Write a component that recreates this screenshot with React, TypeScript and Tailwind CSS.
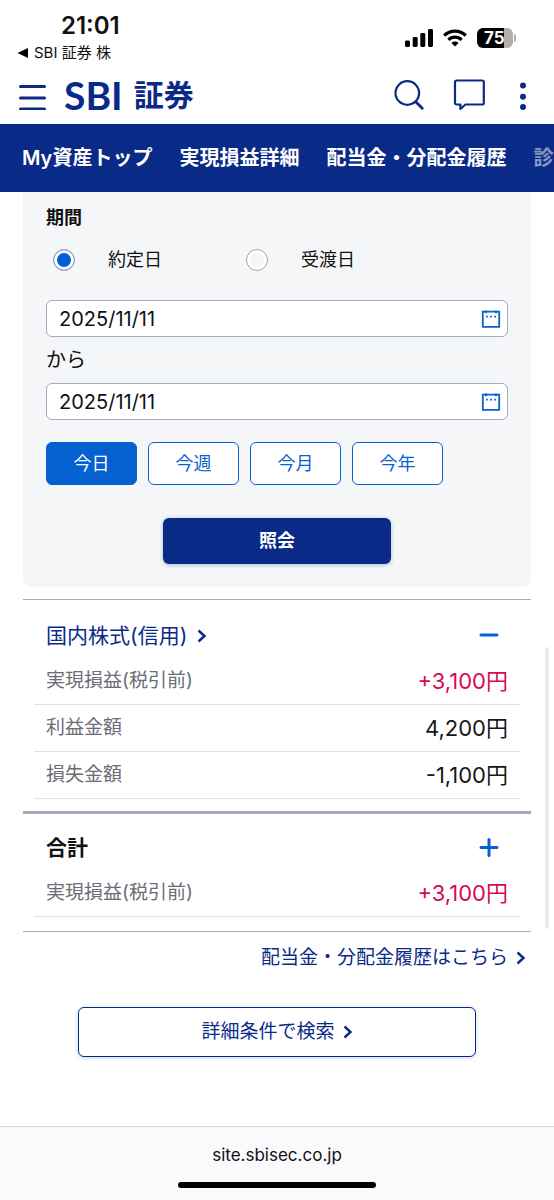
import { useState } from 'react';
import clsx from 'clsx';

// ── Data ─────────────────────────────────────────────────────────────────────

const NAV_ITEMS = ['My資産トップ', '実現損益詳細', '配当金・分配金履歴', '診'];

const PERIODS = ['今日', '今週', '今月', '今年'];

const DATE_TYPES = [
  { value: 'trade', label: '約定日' },
  { value: 'settlement', label: '受渡日' },
];

interface Row {
  label: string;
  value: string;
  gain?: boolean;
}

const MARGIN_ROWS: Row[] = [
  { label: '実現損益(税引前)', value: '+3,100円', gain: true },
  { label: '利益金額', value: '4,200円' },
  { label: '損失金額', value: '-1,100円' },
];

const TOTAL_ROWS: Row[] = [{ label: '実現損益(税引前)', value: '+3,100円', gain: true }];

// ── Icons ────────────────────────────────────────────────────────────────────

function ChevronIcon() {
  return (
    <svg className="h-4 w-[10px]" viewBox="0 0 10 16" fill="none" stroke="currentColor" strokeWidth="2.4">
      <path d="M1.5 2.5 7.5 8l-6 5.5" />
    </svg>
  );
}

function CalendarIcon() {
  return (
    <svg className="size-5" viewBox="0 0 20 20" fill="none" stroke="#0b5fd0">
      <path strokeWidth="1.8" d="M1.8 2.7h16.4v15.2H1.8z" />
      <path strokeWidth="1.8" d="M5 1.6v2.6M15 1.6v2.6" />
      <path strokeWidth="1.8" d="M5 7.6h1.8M9.1 7.6h1.8M13.2 7.6H15" />
    </svg>
  );
}

function StatusIcons() {
  return (
    <div className="flex items-center gap-[10px]">
      <svg className="h-[18px] w-7" viewBox="0 0 28 18">
        <rect x="0" y="11.5" width="5" height="6.5" rx="1.4" />
        <rect x="7.7" y="8" width="5" height="10" rx="1.4" />
        <rect x="15.3" y="4" width="5" height="14" rx="1.4" />
        <rect x="23" y="0" width="5" height="18" rx="1.4" />
      </svg>
      <svg className="h-[18px] w-6" viewBox="0 0 24 18" fill="none" stroke="#000" strokeWidth="3.2">
        <path d="M1.2 6.6a15.4 15.4 0 0 1 21.6 0" />
        <path d="M5.4 10.9a9.4 9.4 0 0 1 13.2 0" />
        <path d="M12 17.6 8.4 14a5.2 5.2 0 0 1 7.2 0z" fill="#000" stroke="none" />
      </svg>
      <div className="flex items-center gap-px">
        <div className="flex h-5 w-9 items-center rounded-[6px] bg-linear-to-r from-black from-75% to-[#b0b0b0] to-75% pl-[7px] text-[17px] leading-5 font-bold text-white">
          75
        </div>
        <div className="h-2 w-[2px] rounded-r-full bg-[#b0b0b0]" />
      </div>
    </div>
  );
}

// ── Header ───────────────────────────────────────────────────────────────────

function StatusBar() {
  return (
    <div className="flex h-16 items-start justify-between pt-3 pr-[38px] pl-[17px]">
      <div>
        <div className="pl-11 text-2xl leading-7 font-semibold">21:01</div>
        <a href="#back" className="flex items-center gap-[5px] text-[15px] leading-[26px]">
          <svg className="h-[10px] w-3" viewBox="0 0 12 10">
            <path d="M0.5 5 11 0v10z" />
          </svg>
          SBI 証券 株
        </a>
      </div>
      <div className="pt-4">
        <StatusIcons />
      </div>
    </div>
  );
}

function Header() {
  return (
    <header className="flex h-[60px] items-center justify-between pr-[27px] pl-[18px] text-[#0a2a88]">
      <div className="flex items-center gap-[18px]">
        <button type="button" aria-label="メニュー">
          <svg className="h-8 w-7" viewBox="0 0 28 32" stroke="currentColor" strokeWidth="3" strokeLinecap="round">
            <path d="M2.5 8.5h24M2.5 20h24M2.5 31h24" />
          </svg>
        </button>
        <a href="#top" className="flex items-center gap-[11px] pt-[2px]">
          <span className="font-['Lato',sans-serif] text-[39px] leading-10 font-bold">SBI</span>
          <span className="text-[30px] leading-10 font-bold">証券</span>
        </a>
      </div>
      <div className="flex items-center">
        <button type="button" aria-label="検索">
          <svg className="size-8" viewBox="0 0 32 32" fill="none" stroke="currentColor" strokeLinecap="round">
            <circle cx="14.3" cy="15" r="11.8" strokeWidth="2.2" />
            <path d="m23 24 6.2 6.2" strokeWidth="2.9" />
          </svg>
        </button>
        <button type="button" aria-label="メッセージ" className="ml-7">
          <svg className="size-8" viewBox="0 0 32 32" fill="none" stroke="currentColor" strokeWidth="2.2" strokeLinejoin="round">
            <path d="M3.6 2.5h25.6a1.6 1.6 0 0 1 1.6 1.6v20.8a1.6 1.6 0 0 1-1.6 1.6H12.4L7.400 31v-4.500H3.600A1.600 1.600 0 0 1 2 24.900V4.100a1.600 1.600 0 0 1 1.600-1.600z" />
          </svg>
        </button>
        <button type="button" aria-label="その他" className="ml-[34px]">
          <svg className="h-8 w-2" viewBox="0 0 8 32" fill="currentColor">
            <circle cx="4" cy="7.5" r="3" />
            <circle cx="4" cy="18.7" r="3" />
            <circle cx="4" cy="29" r="3" />
          </svg>
        </button>
      </div>
    </header>
  );
}

function Nav() {
  return (
    <nav className="flex h-[68px] items-center gap-[27px] overflow-hidden bg-[#0a2a88] pl-[22px] text-xl leading-7 font-semibold whitespace-nowrap text-white">
      {NAV_ITEMS.map((item, i) => (
        <a key={item} href="#nav" className={clsx('shrink-0', i === NAV_ITEMS.length - 1 && 'opacity-50')}>
          {item}
        </a>
      ))}
    </nav>
  );
}

// ── Search form ──────────────────────────────────────────────────────────────

function DateField({ label }: { label: string }) {
  const [value, setValue] = useState('2025/11/11');
  return (
    <div className="flex h-[37px] items-center rounded-[6px] border border-[#a3abc0] bg-white pr-[6px] pl-3">
      <input
        type="text"
        aria-label={label}
        value={value}
        onChange={(e) => setValue(e.target.value)}
        className="min-w-0 flex-1 bg-transparent text-xl leading-6 outline-none"
      />
      <button type="button" aria-label="カレンダー">
        <CalendarIcon />
      </button>
    </div>
  );
}

function SearchPanel() {
  const [dateType, setDateType] = useState('trade');
  const [period, setPeriod] = useState('今日');

  return (
    <form
      className="mx-[23px] rounded-b-lg bg-[#f4f6f8] px-[23px] pt-[14px] pb-[23px]"
      onSubmit={(e) => e.preventDefault()}
    >
      <fieldset>
        <legend className="text-lg leading-6 font-bold">期間</legend>
        <div className="flex pt-[18px] pl-[7px]">
          {DATE_TYPES.map(({ value, label }) => (
            <label key={value} className="flex w-[193px] items-center gap-[33px] text-lg leading-6">
              <input
                type="radio"
                name="dateType"
                checked={dateType === value}
                onChange={() => setDateType(value)}
                className="size-[22px] appearance-none rounded-full border border-[#a4a8b4] bg-[#f6f6f6] shadow-[inset_0_0_0_3px_#fff] checked:bg-[#0560d0]"
              />
              {label}
            </label>
          ))}
        </div>
      </fieldset>

      <div className="pt-7">
        <DateField label="開始日" />
        <p className="py-2 text-xl leading-[30px]">から</p>
        <DateField label="終了日" />
      </div>

      <div className="mt-[22px] flex gap-[11px]">
        {PERIODS.map((p) => (
          <button
            key={p}
            type="button"
            onClick={() => setPeriod(p)}
            className={clsx(
              'h-[43px] w-[91px] rounded-[6px] border border-[#0a5fce] text-lg leading-6',
              period === p ? 'bg-[#0560d0] text-white' : 'bg-white text-[#0a5fce]',
            )}
          >
            {p}
          </button>
        ))}
      </div>

      <button
        type="submit"
        className="mx-auto mt-[33px] block h-[46px] w-[228px] rounded-[6px] bg-[#0a2a88] text-lg leading-6 font-bold text-white shadow-[0_1px_4px_rgba(10,42,136,0.3)]"
      >
        照会
      </button>
    </form>
  );
}

// ── Results ──────────────────────────────────────────────────────────────────

function RowList({ rows }: { rows: Row[] }) {
  return (
    <dl className="px-[11px]">
      {rows.map((row) => (
        <div
          key={row.label}
          className="flex h-[47px] items-center justify-between border-b border-[#dfe2ea] px-3"
        >
          <dt className="text-[19px] leading-7 text-[#6b6d75]">{row.label}</dt>
          <dd className={clsx('text-[22px] leading-7', row.gain ? 'text-[#d8094f]' : 'text-[#16171a]')}>
            {row.value}
          </dd>
        </div>
      ))}
    </dl>
  );
}

function ToggleButton({ initialOpen }: { initialOpen: boolean }) {
  const [open, setOpen] = useState(initialOpen);
  return (
    <button type="button" aria-label="開閉" aria-expanded={open} onClick={() => setOpen(!open)}>
      <svg className="size-5" viewBox="0 0 20 20" stroke="#0560d0" strokeWidth="3" strokeLinecap="round">
        <path d={open ? 'M2 9h16' : 'M2 9.500h16M10 1.500v16'} />
      </svg>
    </button>
  );
}

function Results() {
  return (
    <div className="mx-[23px] mt-3">
      <section className="border-t border-[#a3abc0] pt-5 pb-3">
        <div className="flex items-center justify-between pr-8 pl-[23px]">
          <h2 className="text-[21px] leading-8">
            <a href="#margin" className="flex items-center gap-[10px] text-[#0a2a88]">
              国内株式(信用)
              <ChevronIcon />
            </a>
          </h2>
          <ToggleButton initialOpen />
        </div>
        <div className="pt-[6px]">
          <RowList rows={MARGIN_ROWS} />
        </div>
      </section>

      <section className="border-t-3 border-b border-[#a3abc0] pt-[18px] pb-[14px]">
        <div className="flex items-center justify-between pr-8 pl-[23px]">
          <h2 className="text-[21px] leading-8 font-bold">合計</h2>
          <ToggleButton initialOpen={false} />
        </div>
        <div className="pt-[6px]">
          <RowList rows={TOTAL_ROWS} />
        </div>
      </section>
    </div>
  );
}

function Links() {
  return (
    <div className="text-[19px] leading-6 text-[#0a2a88]">
      <div className="flex justify-end pt-[14px] pr-7">
        <a href="#dividends" className="flex items-center gap-2">
          配当金・分配金履歴はこちら
          <ChevronIcon />
        </a>
      </div>
      <div className="mt-[37px] px-[78px]">
        <button
          type="button"
          className="flex h-[50px] w-full items-center justify-center gap-2 rounded-[6px] border border-[#0a2a88] bg-white shadow-[0_1px_4px_rgba(10,42,136,0.2)]"
        >
          詳細条件で検索
          <ChevronIcon />
        </button>
      </div>
    </div>
  );
}

// ── Page ─────────────────────────────────────────────────────────────────────

export default function App() {
  return (
    <div
      lang="ja"
      className="relative flex min-h-screen flex-col bg-white font-['Inter','Noto_Sans_CJK_JP',sans-serif] text-[#111]"
    >
      <StatusBar />
      <Header />
      <Nav />
      <main className="pb-16">
        <SearchPanel />
        <Results />
        <Links />
      </main>
      <footer className="mt-auto flex flex-col items-center border-t border-[#d8d8dc] bg-[#fafafc] pt-4 pb-3">
        <div className="text-[17px] leading-6">site.sbisec.co.jp</div>
        <div className="mt-[15px] h-[6px] w-[198px] rounded-full bg-black" />
      </footer>
      {/* overlay scroll thumb */}
      <div className="absolute top-[647px] right-[5px] h-[282px] w-1 rounded-full bg-[#ededef]" />
    </div>
  );
}
